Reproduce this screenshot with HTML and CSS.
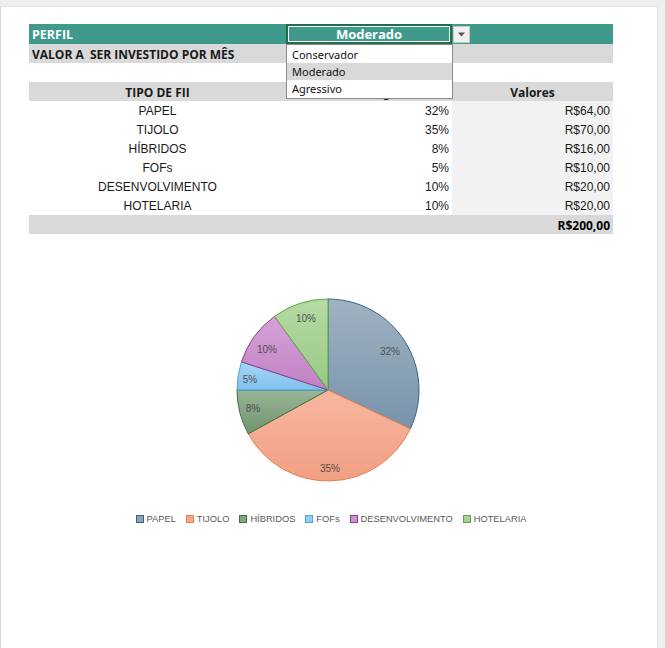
FILE: index.html
```html
<!DOCTYPE html>
<html>
    <head>
        <title>Perfil de investimento</title>

        <link rel="stylesheet" href="styles.css">
    </head>

    <body>
        <div class="sheet">
            <div class="table-wrap">
                <table class="fii-table">
                    <colgroup>
                        <col class="col-tipo">
                        <col class="col-pct">
                        <col class="col-valor">
                    </colgroup>
                    <tr class="row-perfil">
                        <td class="label">PERFIL</td>
                        <td class="perfil-cell">Moderado</td>
                        <td></td>
                    </tr>
                    <tr class="row-valor">
                        <td class="label" colspan="3">VALOR A&nbsp; SER INVESTIDO POR MÊS</td>
                    </tr>
                    <tr class="row-blank">
                        <td colspan="3"></td>
                    </tr>
                    <tr class="row-head">
                        <td class="center">TIPO DE FII</td>
                        <td class="center">Porcentagem</td>
                        <td class="center">Valores</td>
                    </tr>
                    <tr class="row-data">
                        <td class="center">PAPEL</td>
                        <td class="right">32%</td>
                        <td class="right money">R$64,00</td>
                    </tr>
                    <tr class="row-data">
                        <td class="center">TIJOLO</td>
                        <td class="right">35%</td>
                        <td class="right money">R$70,00</td>
                    </tr>
                    <tr class="row-data">
                        <td class="center">HÍBRIDOS</td>
                        <td class="right">8%</td>
                        <td class="right money">R$16,00</td>
                    </tr>
                    <tr class="row-data">
                        <td class="center">FOFs</td>
                        <td class="right">5%</td>
                        <td class="right money">R$10,00</td>
                    </tr>
                    <tr class="row-data">
                        <td class="center">DESENVOLVIMENTO</td>
                        <td class="right">10%</td>
                        <td class="right money">R$20,00</td>
                    </tr>
                    <tr class="row-data">
                        <td class="center">HOTELARIA</td>
                        <td class="right">10%</td>
                        <td class="right money">R$20,00</td>
                    </tr>
                    <tr class="row-total">
                        <td></td>
                        <td></td>
                        <td class="right">R$200,00</td>
                    </tr>
                </table>

                <div class="drop-arrow">
                    <svg width="9" height="5" viewBox="0 0 9 5"><path d="M1 0.5 L8 0.5 L4.5 4.5 Z" fill="#555"/></svg>
                </div>

                <div class="drop-list">
                    <div class="drop-item">Conservador</div>
                    <div class="drop-item selected">Moderado</div>
                    <div class="drop-item">Agressivo</div>
                </div>
            </div>

            <svg class="pie" width="656" height="265" viewBox="0 0 656 265">
                <defs>
                    <linearGradient id="g-papel" x1="0" y1="0" x2="0" y2="1">
                        <stop offset="0" stop-color="#a0b2c2"/>
                        <stop offset="1" stop-color="#7893ab"/>
                    </linearGradient>
                    <linearGradient id="g-tijolo" x1="0" y1="0" x2="0" y2="1">
                        <stop offset="0" stop-color="#f7b7a0"/>
                        <stop offset="1" stop-color="#f29f82"/>
                    </linearGradient>
                    <linearGradient id="g-hibridos" x1="0" y1="0" x2="0" y2="1">
                        <stop offset="0" stop-color="#9ab597"/>
                        <stop offset="1" stop-color="#6f936e"/>
                    </linearGradient>
                    <linearGradient id="g-fofs" x1="0" y1="0" x2="0" y2="1">
                        <stop offset="0" stop-color="#a6d7f6"/>
                        <stop offset="1" stop-color="#80c1ec"/>
                    </linearGradient>
                    <linearGradient id="g-desenv" x1="0" y1="0" x2="0" y2="1">
                        <stop offset="0" stop-color="#d6a3d7"/>
                        <stop offset="1" stop-color="#bf80c2"/>
                    </linearGradient>
                    <linearGradient id="g-hotel" x1="0" y1="0" x2="0" y2="1">
                        <stop offset="0" stop-color="#b5dba2"/>
                        <stop offset="1" stop-color="#98c985"/>
                    </linearGradient>
                </defs>

                <!-- slices clockwise from the top -->
                <path d="M327 145 L327 54 A91 91 0 0 1 409.34 183.75 Z" fill="url(#g-papel)" stroke="#34658a" stroke-width="1"/>
                <path d="M327 145 L409.34 183.75 A91 91 0 0 1 247.26 188.84 Z" fill="url(#g-tijolo)" stroke="#ec7f52" stroke-width="1"/>
                <path d="M327 145 L247.26 188.84 A91 91 0 0 1 236 145 Z" fill="url(#g-hibridos)" stroke="#3d6e3d" stroke-width="1"/>
                <path d="M327 145 L236 145 A91 91 0 0 1 240.45 116.88 Z" fill="url(#g-fofs)" stroke="#4ba3df" stroke-width="1"/>
                <path d="M327 145 L240.45 116.88 A91 91 0 0 1 273.51 71.38 Z" fill="url(#g-desenv)" stroke="#8e3b91" stroke-width="1"/>
                <path d="M327 145 L273.51 71.38 A91 91 0 0 1 327 54 Z" fill="url(#g-hotel)" stroke="#5fa547" stroke-width="1"/>

                <g class="pie-label">
                    <text x="389" y="106">32%</text>
                    <text x="329" y="223">35%</text>
                    <text x="252" y="163">8%</text>
                    <text x="249" y="134">5%</text>
                    <text x="266" y="104">10%</text>
                    <text x="305" y="73">10%</text>
                </g>
            </svg>

            <div class="legend">
                <span class="legend-item"><span class="swatch sw-papel"></span>PAPEL</span>
                <span class="legend-item"><span class="swatch sw-tijolo"></span>TIJOLO</span>
                <span class="legend-item"><span class="swatch sw-hibridos"></span>HÍBRIDOS</span>
                <span class="legend-item"><span class="swatch sw-fofs"></span>FOFs</span>
                <span class="legend-item"><span class="swatch sw-desenv"></span>DESENVOLVIMENTO</span>
                <span class="legend-item"><span class="swatch sw-hotel"></span>HOTELARIA</span>
            </div>
        </div>
    </body>
</html>
```

FILE: styles.css
```css
body{
    margin:0;
    background-color:#efefef;
}
.sheet{
    margin:6px 7px 0 0;
    height:641px;
    background-color:white;
    border-top:1px solid #e2e2e2;
    border-left:1px solid #d9d9d9;
    border-right:1px solid #e2e2e2;
}

.table-wrap{
    position:relative;
    margin-left:28px;
    padding-top:17px;
    width:584px;
}
.fii-table{
    border-collapse:collapse;
    table-layout:fixed;
    width:584px;
    font-family:"Liberation Sans", Arial, sans-serif;
    font-size:12px;
    color:#1a1a1a;
}
.col-tipo{
    width:257px;
}
.col-pct{
    width:166px;
}
.col-valor{
    width:161px;
}
.fii-table td{
    padding:0 3px 1px 3px;
    height:19px;
    line-height:15px;
    vertical-align:bottom;
    white-space:nowrap;
    overflow:hidden;
    box-sizing:border-box;
}
.center{
    text-align:center;
}
.right{
    text-align:right;
}

.fii-table .row-perfil td{
    height:20px;
    padding-bottom:0;
    vertical-align:middle;
    background-color:#3f9a8c;
}
.row-perfil .label{
    color:white;
    font-family:"Open Sans", sans-serif;
    font-weight:bold;
    font-size:12.5px;
}
.perfil-cell{
    text-align:center;
    color:white;
    font-family:"Open Sans", sans-serif;
    font-weight:bold;
    font-size:13px;
    box-shadow:inset 0 0 0 2px #1f6e48, inset 0 0 0 3px white;
}
.row-valor td{
    background-color:#d9d9d9;
}
.row-valor .label{
    font-family:"Open Sans", sans-serif;
    font-weight:bold;
    font-size:12px;
}
.row-head td{
    background-color:#d9d9d9;
    font-family:"Open Sans", sans-serif;
    font-weight:bold;
    font-size:12px;
}
.row-data .money{
    background-color:#f2f2f2;
}
.row-total td{
    background-color:#d9d9d9;
    font-family:"Open Sans", sans-serif;
    font-weight:bold;
    font-size:12px;
    color:black;
}

.drop-arrow{
    position:absolute;
    left:424px;
    top:19px;
    width:15px;
    height:15px;
    background-color:#f0f0f0;
    border:1px solid #c8c8c8;
    display:flex;
    align-items:center;
    justify-content:center;
}
.drop-list{
    position:absolute;
    left:257px;
    top:37px;
    width:165px;
    border:1px solid #8a8a8a;
    background-color:white;
    font-family:"Noto Sans", sans-serif;
    font-size:11px;
    color:#111;
    padding:1px 0;
}
.drop-item{
    height:17px;
    line-height:17px;
    padding-left:5px;
}
.drop-item.selected{
    background-color:#d9d9d9;
}

.pie{
    display:block;
    margin-top:11px;
}
.pie-label text{
    font-family:"Liberation Sans", Arial, sans-serif;
    font-size:10px;
    fill:#505050;
    text-anchor:middle;
    dominant-baseline:central;
}

.legend{
    display:flex;
    justify-content:center;
    gap:10px;
    margin-top:4px;
    margin-left:4px;
    font-family:"Liberation Sans", Arial, sans-serif;
    font-size:9.3px;
    color:#595959;
}
.legend-item{
    display:flex;
    align-items:center;
}
.swatch{
    width:6px;
    height:6px;
    margin-right:3px;
    border:1px solid;
}
.sw-papel{
    background-color:#8ea3b8;
    border-color:#34658a;
}
.sw-tijolo{
    background-color:#f4a98d;
    border-color:#ec7f52;
}
.sw-hibridos{
    background-color:#84a583;
    border-color:#3d6e3d;
}
.sw-fofs{
    background-color:#93ccf1;
    border-color:#4ba3df;
}
.sw-desenv{
    background-color:#cb90cd;
    border-color:#8e3b91;
}
.sw-hotel{
    background-color:#a7d294;
    border-color:#5fa547;
}
```
